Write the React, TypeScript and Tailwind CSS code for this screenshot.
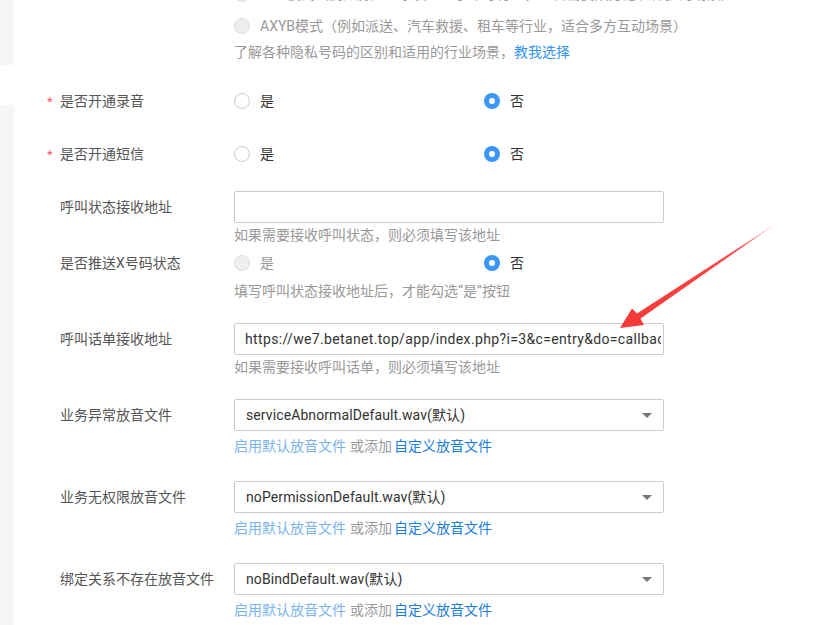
import React from "react";

const FONT = { fontFamily: 'Roboto, "Noto Sans CJK SC", sans-serif' };

function Radio({ state }: { state: "off" | "on" | "disabled" }) {
  if (state === "on")
    return (
      <span className="flex h-4 w-4 shrink-0 items-center justify-center rounded-full bg-[#3a97f5]">
        <span className="h-[6px] w-[6px] rounded-full bg-white" />
      </span>
    );
  if (state === "disabled")
    return <span className="h-4 w-4 shrink-0 rounded-full border border-[#dcdcdc] bg-[#eeeeee]" />;
  return <span className="h-4 w-4 shrink-0 rounded-full border border-[#cccccc] bg-white" />;
}

function Label({ text, required }: { text: string; required?: boolean }) {
  return (
    <div className="relative flex w-[234px] shrink-0 items-center pl-[60px] text-[14px] text-[#555]">
      {required && <span className="absolute left-[47px] top-[1px] text-[13px] text-[#ff5a5a]">*</span>}
      {text}
    </div>
  );
}

function YesNo({ yes, no, disabled }: { yes: "off" | "on" | "disabled"; no: "off" | "on" | "disabled"; disabled?: boolean }) {
  return (
    <div className="flex items-center text-[14px]">
      <div className="flex w-[250px] items-center gap-[10px]">
        <Radio state={yes} />
        <span className={disabled ? "text-[#999]" : "text-[#333]"}>是</span>
      </div>
      <div className="flex items-center gap-[10px]">
        <Radio state={no} />
        <span className="text-[#333]">否</span>
      </div>
    </div>
  );
}

function Hint({ children, mt }: { children: React.ReactNode; mt: string }) {
  return (
    <div className={`flex h-5 items-center pl-[234px] text-[14px] text-[#999] ${mt}`}>{children}</div>
  );
}

function FileSelect({ label, value, mt }: { label: string; value: string; mt: string }) {
  return (
    <>
      <div className={`flex h-8 ${mt}`}>
        <Label text={label} />
        <div className="flex h-8 w-[430px] items-center justify-between rounded-[2px] border border-[#cccccc] bg-white pl-[11px] pr-[11px] text-[14px] tracking-[0.1px] text-[#333]">
          <span>{value}</span>
          <span className="h-0 w-0 border-x-[5px] border-t-[5px] border-x-transparent border-t-[#777]" />
        </div>
      </div>
      <div className="mt-[5px] flex h-5 items-center pl-[234px] text-[14px]">
        <span className="text-[#7ab4ee]">启用默认放音文件</span>
        <span className="ml-[4px] text-[#999]">或添加</span>
        <span className="ml-[2px] text-[#1a7ed8]">自定义放音文件</span>
      </div>
    </>
  );
}

export default function App() {
  return (
    <div className="relative flex h-[625px] w-[833px] overflow-hidden bg-white" style={FONT}>
      <div className="flex w-[14px] shrink-0 flex-col">
        <div className="h-[65px] bg-[#f5f7f7]" />
        <div className="h-[40px] bg-white" />
        <div className="flex-1 bg-[#f5f7f7]" />
      </div>
      <div className="flex flex-1 flex-col -ml-[14px]">
        <div className="-mt-[22px] flex h-8 items-center gap-[10px] pl-[234px] text-[14px] text-[#999]">
          <Radio state="disabled" />
          <span>AXB模式（例如房产、家装、二手车等行业，适合需要双方隐私保护的场景）</span>
        </div>
        <div className="flex h-8 items-center gap-[10px] pl-[234px] text-[14px] text-[#999]">
          <Radio state="disabled" />
          <span>AXYB模式（例如派送、汽车救援、租车等行业，适合多方互动场景）</span>
        </div>
        <div className="flex h-5 items-center pl-[234px] text-[14px] text-[#999]">
          了解各种隐私号码的区别和适用的行业场景，<span className="text-[#3396f7]">教我选择</span>
        </div>

        <div className="mt-[29px] flex h-5">
          <Label text="是否开通录音" required />
          <YesNo yes="off" no="on" />
        </div>
        <div className="mt-[33px] flex h-5">
          <Label text="是否开通短信" required />
          <YesNo yes="off" no="on" />
        </div>

        <div className="mt-[27px] flex h-8">
          <Label text="呼叫状态接收地址" />
          <div className="h-8 w-[430px] rounded-[2px] border border-[#cccccc] bg-white" />
        </div>
        <Hint mt="mt-[2px]">如果需要接收呼叫状态，则必须填写该地址</Hint>

        <div className="mt-[8px] flex h-5">
          <Label text="是否推送X号码状态" />
          <YesNo yes="disabled" no="on" disabled />
        </div>
        <Hint mt="mt-[8px]">填写呼叫状态接收地址后，才能勾选“是”按钮</Hint>

        <div className="mt-[22px] flex h-8">
          <Label text="呼叫话单接收地址" />
          <div className="flex h-8 w-[430px] items-center overflow-hidden rounded-[2px] border border-[#cccccc] bg-white pl-[10px] pr-[2px] text-[14px] tracking-[0.35px] text-[#333]">
            <span className="block overflow-hidden whitespace-nowrap">
              https://we7.betanet.top/app/index.php?i=3&amp;c=entry&amp;do=callback&amp;m=ewei_shopv2
            </span>
          </div>
        </div>
        <Hint mt="mt-[2px]">如果需要接收呼叫话单，则必须填写该地址</Hint>

        <FileSelect label="业务异常放音文件" value="serviceAbnormalDefault.wav(默认)" mt="mt-[22px]" />
        <FileSelect label="业务无权限放音文件" value="noPermissionDefault.wav(默认)" mt="mt-[25px]" />
        <FileSelect label="绑定关系不存在放音文件" value="noBindDefault.wav(默认)" mt="mt-[25px]" />
      </div>

      <svg className="pointer-events-none absolute left-0 top-0" width="833" height="625" viewBox="0 0 833 625">
        <defs>
          <linearGradient id="ag" x1="777" y1="223" x2="640" y2="316" gradientUnits="userSpaceOnUse">
            <stop offset="0" stopColor="#ffb3b3" />
            <stop offset="0.25" stopColor="#ff4a4a" />
            <stop offset="1" stopColor="#f53a3a" />
          </linearGradient>
        </defs>
        <polygon
          points="777,223 640.5,318.5 644,325 620,328 632,308.5 637,313.5"
          fill="url(#ag)"
        />
      </svg>
    </div>
  );
}
